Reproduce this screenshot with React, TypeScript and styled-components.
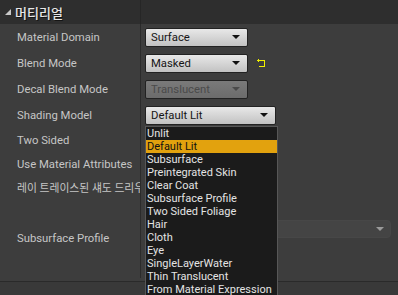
import styled, { createGlobalStyle } from "styled-components";

const GlobalStyle = createGlobalStyle`
  body {
    margin: 0;
    background: #3d3d3d;
  }
`;

const Panel = styled.div`
  position: relative;
  width: 398px;
  height: 295px;
  overflow: hidden;
  display: flex;
  flex-direction: column;
  background: #3d3d3d;
  font-family: Roboto, "Noto Sans CJK KR", sans-serif;
`;

const Header = styled.div`
  display: grid;
  grid-template-columns: 141px 1fr;
  height: 24px;
  flex-shrink: 0;
  background: #2e2e2e;
`;

const HeaderTitle = styled.div`
  display: flex;
  align-items: center;
  gap: 4px;
  padding-left: 5px;
  color: #e6e6e6;
  font-family: "Noto Sans CJK KR", sans-serif;
  font-size: 13px;
  font-weight: 500;
  text-shadow: 1px 1px 0 #151515;
  border-right: 1px solid #262626;
`;

const Row = styled.div<{ $h: number }>`
  display: grid;
  grid-template-columns: 141px 1fr;
  height: ${(p) => p.$h}px;
  flex-shrink: 0;
`;

const Label = styled.div<{ $ko?: boolean }>`
  display: flex;
  align-items: center;
  padding-left: 17px;
  color: #c6c6c6;
  font-size: ${(p) => (p.$ko ? "10.8px" : "11.3px")};
  white-space: nowrap;
  overflow: hidden;
  border-right: 1px solid #2b2b2b;
`;

const Value = styled.div<{ $top?: number }>`
  display: flex;
  align-items: ${(p) => (p.$top ? "flex-start" : "center")};
  padding-left: 4px;
  padding-top: ${(p) => p.$top ?? 0}px;
  gap: 9px;
  min-width: 0;
`;

const Combo = styled.div<{ $w: number; $disabled?: boolean }>`
  box-sizing: border-box;
  width: ${(p) => p.$w}px;
  height: 19px;
  display: flex;
  align-items: center;
  justify-content: space-between;
  padding: 0 7px 0 5px;
  border: 1px solid #222;
  border-radius: 2px;
  background: ${(p) =>
    p.$disabled
      ? "linear-gradient(#7a7a7a, #6c6c6c)"
      : "linear-gradient(#e8e8e8, #c2c2c2)"};
  color: ${(p) => (p.$disabled ? "#4a4a4a" : "#151515")};
  font-size: 11.3px;
`;

const Arrow = styled.span<{ $color?: string }>`
  width: 0;
  height: 0;
  border-left: 4px solid transparent;
  border-right: 4px solid transparent;
  border-top: 4px solid ${(p) => p.$color ?? "#111"};
`;

const AssetCombo = styled.div`
  box-sizing: border-box;
  flex: 1;
  height: 18px;
  margin-right: 7px;
  display: flex;
  align-items: center;
  justify-content: flex-end;
  padding-right: 6px;
  background: #444;
  border: 1px solid #474747;
  border-radius: 4px;
`;

const Spacer = styled.div`
  height: 3px;
  flex-shrink: 0;
`;

const Footer = styled.div`
  flex: 1;
  border-top: 1px solid #2a2a2a;
  background: #393939;
`;

const Menu = styled.div`
  position: absolute;
  left: 145px;
  top: 126px;
  width: 133px;
  box-sizing: border-box;
  background: #1b1b1b;
  border: 1px solid #575757;
  border-bottom: none;
`;

const MenuItem = styled.div<{ $active?: boolean }>`
  height: 13px;
  line-height: 13px;
  padding-left: 1px;
  font-size: 11px;
  white-space: nowrap;
  color: ${(p) => (p.$active ? "#111" : "#e4e4e4")};
  background: ${(p) => (p.$active ? "#e2a20e" : "transparent")};
`;

const ResetIcon = () => (
  <svg width="9" height="9" viewBox="0 0 9 9" shapeRendering="crispEdges">
    <path d="M1 1.5H7.5V7.5H2" fill="none" stroke="#f0f000" strokeWidth="1.3" />
    <path d="M0 1.5L2 0V3Z" fill="#f0f000" />
  </svg>
);

const Triangle = () => (
  <svg width="6" height="6" viewBox="0 0 6 6">
    <path d="M6 0V6H0Z" fill="#c8c8c8" />
  </svg>
);

const shadingModels = [
  "Unlit",
  "Default Lit",
  "Subsurface",
  "Preintegrated Skin",
  "Clear Coat",
  "Subsurface Profile",
  "Two Sided Foliage",
  "Hair",
  "Cloth",
  "Eye",
  "SingleLayerWater",
  "Thin Translucent",
  "From Material Expression",
];

export default function App() {
  return (
    <Panel>
      <GlobalStyle />
      <Header>
        <HeaderTitle>
          <Triangle />
          머티리얼
        </HeaderTitle>
        <div />
      </Header>
      <Row $h={26}>
        <Label>Material Domain</Label>
        <Value>
          <Combo $w={103}>
            Surface
            <Arrow />
          </Combo>
        </Value>
      </Row>
      <Row $h={26}>
        <Label>Blend Mode</Label>
        <Value>
          <Combo $w={103}>
            Masked
            <Arrow />
          </Combo>
          <ResetIcon />
        </Value>
      </Row>
      <Row $h={26}>
        <Label>Decal Blend Mode</Label>
        <Value>
          <Combo $w={103} $disabled>
            Translucent
            <Arrow $color="#4a4a4a" />
          </Combo>
        </Value>
      </Row>
      <Row $h={26}>
        <Label>Shading Model</Label>
        <Value>
          <Combo $w={131}>
            Default Lit
            <Arrow />
          </Combo>
        </Value>
      </Row>
      <Row $h={24}>
        <Label>Two Sided</Label>
        <Value />
      </Row>
      <Row $h={24}>
        <Label>Use Material Attributes</Label>
        <Value />
      </Row>
      <Row $h={22}>
        <Label $ko>레이 트레이스된 섀도 드리우기</Label>
        <Value />
      </Row>
      <Row $h={80}>
        <Label>Subsurface Profile</Label>
        <Value $top={22}>
          <AssetCombo>
            <Arrow $color="#9a9a9a" />
          </AssetCombo>
        </Value>
      </Row>
      <Spacer />
      <Footer />
      <Menu>
        {shadingModels.map((m) => (
          <MenuItem key={m} $active={m === "Default Lit"}>
            {m}
          </MenuItem>
        ))}
      </Menu>
    </Panel>
  );
}
